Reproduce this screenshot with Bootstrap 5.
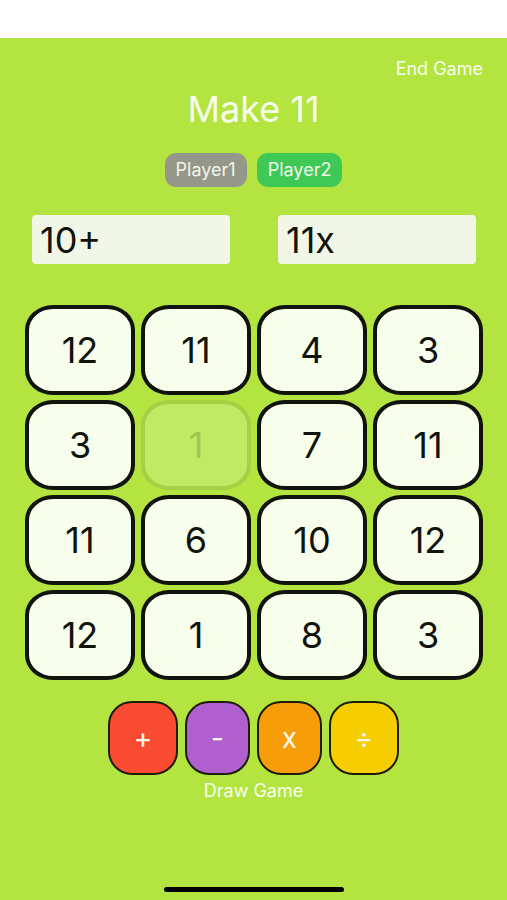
<!DOCTYPE html>
<html lang="en">
<head>
<meta charset="utf-8">
<meta name="viewport" content="width=device-width, initial-scale=1">
<title>Make 11</title>
<link href="https://cdn.jsdelivr.net/npm/bootstrap@5.3.0/dist/css/bootstrap.min.css" rel="stylesheet">
<style>
body { background: #b4e43f; font-family: Inter, "Liberation Sans", sans-serif; color: #10140c; }
.status-strip { height: 38px; background: #fff; }
.plain-link { color: #f7fdeb; font-size: 18px; line-height: 24px; text-decoration: none; }
.header-bar { padding-top: 19px; }
.game-title { color: #f7fdeb; font-size: 36px; line-height: 40px; font-weight: 400; }
.pill { height: 34px; padding: 0 11px; border: 0; border-radius: 11px; color: #f2f5ea; font-size: 18px; line-height: 34px; }
.pill-idle { background: #95978b; }
.pill-active { background: #3ec956; }
.players { gap: 10px; }
.entries { margin-top: 28px; padding: 0 31px 0 32px; column-gap: 48px; }
.entries input { height: 49px; min-width: 0; padding: 0 8px; border: 0; border-radius: 4px; background: #f1f6e6; color: #10140c; font-size: 36px; line-height: 48px; }
.tiles { display: grid; grid-template-columns: repeat(4, 1fr); gap: 5px 6px; margin-top: 41px; padding: 0 24px 0 25px; }
.tile { height: 90px; padding: 0; border: 4px solid #10140c; border-radius: 28px / 25px; background: #f8feec; color: #10140c; font-size: 36px; line-height: 40px; }
.tile:disabled { border-color: #a5d044; background: #c0e964; color: #a2c751; }
.ops { margin-top: 21px; gap: 7px; }
.op { width: 65px; height: 74px; padding: 0; border: 2px solid #1c1c0a; border-radius: 24px; color: #fdf8ee; font-size: 28px; line-height: 32px; }
.op-wide { width: 70px; }
.op-add { background: #fa4b33; }
.op-sub { background: #b05fce; }
.op-mul { background: #f79d0a; }
.op-div { background: #f6cd00; }
.home-bar { width: 180px; height: 5px; border-radius: 3px; background: #000; margin-bottom: 8px; }
</style>
<script src="https://cdn.jsdelivr.net/npm/bootstrap@5.3.0/dist/js/bootstrap.bundle.min.js" defer></script>
</head>
<body>
<div class="d-flex flex-column min-vh-100">
  <div class="status-strip"></div>
  <header class="text-center">
    <div class="header-bar d-flex justify-content-end px-4"><a class="plain-link" href="#end">End Game</a></div>
    <h1 class="game-title mt-2 mb-4">Make 11</h1>
    <div class="players d-flex justify-content-center">
      <button type="button" class="pill pill-idle">Player1</button>
      <button type="button" class="pill pill-active">Player2</button>
    </div>
  </header>
  <main class="text-center">
    <div class="entries d-flex">
      <input class="w-50" type="text" value="10+" aria-label="Player1 entry">
      <input class="w-50" type="text" value="11x" aria-label="Player2 entry">
    </div>
    <div class="tiles">
      <button type="button" class="tile">12</button>
      <button type="button" class="tile">11</button>
      <button type="button" class="tile">4</button>
      <button type="button" class="tile">3</button>
      <button type="button" class="tile">3</button>
      <button type="button" class="tile" disabled>1</button>
      <button type="button" class="tile">7</button>
      <button type="button" class="tile">11</button>
      <button type="button" class="tile">11</button>
      <button type="button" class="tile">6</button>
      <button type="button" class="tile">10</button>
      <button type="button" class="tile">12</button>
      <button type="button" class="tile">12</button>
      <button type="button" class="tile">1</button>
      <button type="button" class="tile">8</button>
      <button type="button" class="tile">3</button>
    </div>
    <div class="ops d-flex justify-content-center">
      <button type="button" class="op op-wide op-add">+</button>
      <button type="button" class="op op-sub">-</button>
      <button type="button" class="op op-mul">x</button>
      <button type="button" class="op op-wide op-div">÷</button>
    </div>
    <div class="mt-1"><a class="plain-link" href="#draw">Draw Game</a></div>
  </main>
  <div class="home-bar mt-auto mx-auto"></div>
</div>
</body>
</html>
